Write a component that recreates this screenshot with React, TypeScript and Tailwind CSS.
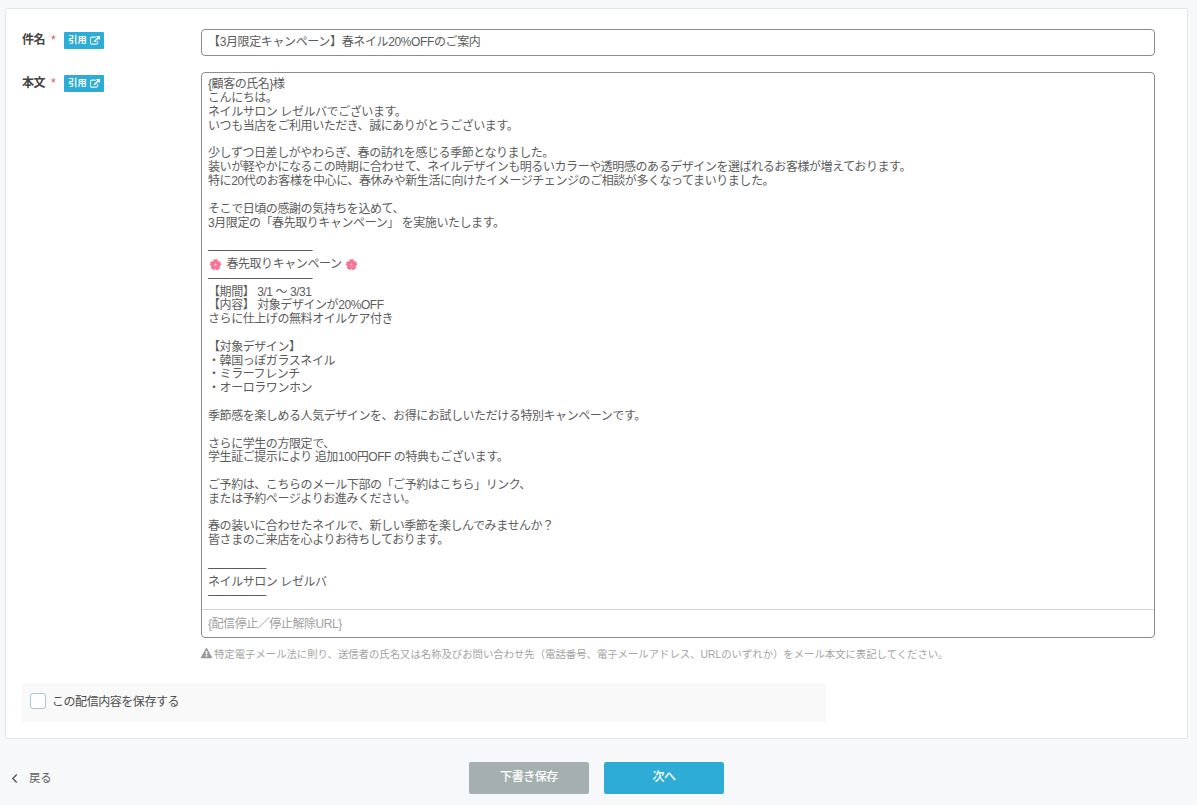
import { Fragment } from "react";

const BODY = `{顧客の氏名}様
こんにちは。
ネイルサロン レゼルバでございます。
いつも当店をご利用いただき、誠にありがとうございます。

少しずつ日差しがやわらぎ、春の訪れを感じる季節となりました。
装いが軽やかになるこの時期に合わせて、ネイルデザインも明るいカラーや透明感のあるデザインを選ばれるお客様が増えております。
特に20代のお客様を中心に、春休みや新生活に向けたイメージチェンジのご相談が多くなってまいりました。

そこで日頃の感謝の気持ちを込めて、
3月限定の「春先取りキャンペーン」 を実施いたします。

―――――――――
🌸 春先取りキャンペーン 🌸
―――――――――
【期間】 3/1 〜 3/31
【内容】 対象デザインが20%OFF
さらに仕上げの無料オイルケア付き

【対象デザイン】
・韓国っぽガラスネイル
・ミラーフレンチ
・オーロラワンホン

季節感を楽しめる人気デザインを、お得にお試しいただける特別キャンペーンです。

さらに学生の方限定で、
学生証ご提示により 追加100円OFF の特典もございます。

ご予約は、こちらのメール下部の「ご予約はこちら」リンク、
または予約ページよりお進みください。

春の装いに合わせたネイルで、新しい季節を楽しんでみませんか？
皆さまのご来店を心よりお待ちしております。

―――――
ネイルサロン レゼルバ
―――――`;

function Blossom() {
  return (
    <svg viewBox="0 0 24 24" className="mr-[1.500px] ml-[1px] inline-block size-[13px] align-[-3px]" aria-label="🌸">
      {[0, 72, 144, 216, 288].map((a) => (
        <path
          key={a}
          transform={`rotate(${a} 12 12.5)`}
          d="M12 13C8 10.500 6.800 6.500 8.300 3.300Q9.800 .6 12 3.200Q14.200 .6 15.700 3.300C17.200 6.500 16 10.500 12 13Z"
          fill="#fb7294"
        />
      ))}
      <circle cx="12" cy="12.500" r="4.500" fill="#f4668d" />
      <path d="M12 9v4M12 13l-3.300-1M12 13l3.300-1M12 13l-2 3M12 13l2 3" stroke="#ffd0dc" strokeWidth="1.200" />
    </svg>
  );
}

function Quote() {
  return (
    <button className="flex h-[17px] w-10 items-center justify-center gap-[3px] rounded-[1px] bg-[#2dacd5] text-[9.200px] leading-none font-bold tracking-normal text-white">
      <span className="pt-px">引用</span>
      <svg viewBox="0 0 1792 1792" className="size-[10px] fill-white stroke-white stroke-[60]">
        <path d="M1408 928v320q0 119-84.500 203.500T1120 1536H288q-119 0-203.500-84.500T0 1248V416q0-119 84.500-203.500T288 128h704q14 0 23 9t9 23v64q0 14-9 23t-23 9H288q-66 0-113 47t-47 113v832q0 66 47 113t113 47h832q66 0 113-47t47-113V928q0-14 9-23t23-9h64q14 0 23 9t9 23zm384-864v512q0 26-19 45t-45 19-45-19l-176-176-652 652q-10 10-23 10t-23-10L695 983q-10-10-10-23t10-23l652-652-176-176q-19-19-19-45t19-45 45-19h512q26 0 45 19t19 45z" />
      </svg>
    </button>
  );
}

function Label({ text }: { text: string }) {
  return (
    <div className="flex h-[23px] w-[179px] shrink-0 items-center">
      <span className="w-[29px] pt-px font-bold text-[#444]">{text}</span>
      <span className="w-[13px] text-[#d9534f]">*</span>
      <Quote />
    </div>
  );
}

export default function App() {
  return (
    <div className="flex h-[805px] w-full flex-col bg-[#f6f8fa] pt-2 pl-[5px] font-['Liberation_Sans','Noto_Sans_CJK_JP',sans-serif] text-[12px] leading-[13.820px] tracking-[-0.450px] text-[#5c5c5c]">
      <main className="flex h-[731px] w-[1183px] flex-col rounded-[1px] border border-[#e1e7ec] bg-white pt-5 pl-4">
        <div className="flex h-[43px]">
          <Label text="件名" />
          <div className="flex h-[27px] w-[954px] items-center rounded-[4px] border border-[#8c8c8c] px-1.5 tracking-[-0.370px]">
            【3月限定キャンペーン】春ネイル20%OFFのご案内
          </div>
        </div>
        <div className="flex h-[566px]">
          <Label text="本文" />
          <div className="flex w-[954px] flex-col rounded-[4px] border border-[#8c8c8c]">
            <div className="h-[536px] px-1.5 pt-[5.400px] tracking-[-0.430px] whitespace-pre">
              {BODY.split("🌸").map((part, i) => (
                <Fragment key={i}>
                  {i > 0 && <Blossom />}
                  {part}
                </Fragment>
              ))}
            </div>
            <div className="flex flex-1 items-center border-t border-[#d5d5d5] px-1.5 pt-[2px] text-[#a0a0a0]">
              {"{配信停止／停止解除URL}"}
            </div>
          </div>
        </div>
        <p className="mt-[9px] ml-[179px] flex h-[14px] items-center text-[10.370px] tracking-normal text-[#a3a3a3]">
          <svg viewBox="0 0 1792 1792" className="mr-[2px] mb-px size-[11px] fill-[#999]">
            <path d="M1024 1375v-190q0-14-9.500-23.500T992 1152H800q-13 0-22.500 9.500T768 1185v190q0 14 9.500 23.500T800 1408h192q13 0 22.500-9.500t9.500-23.500zm-2-374l18-459q0-12-10-19-13-11-24-11H786q-11 0-24 11-10 7-10 21l17 457q0 10 10 16.500t24 6.500h185q14 0 23.500-6.500t10.500-16.500zm-14-934l768 1408q35 63-2 126-17 29-46.500 46t-63.500 17H128q-34 0-63.500-17T18 1601q-37-63-2-126L784 67q17-31 47-49t65-18 65 18 47 49z" />
          </svg>
          <span className="pt-px">
            特定電子メール法に則り、送信者の氏名又は名称及びお問い合わせ先（電話番号、電子メールアドレス、URLのいずれか）をメール本文に表記してください。
          </span>
        </p>
        <label className="mt-[22px] flex h-[39px] w-[804px] items-center bg-[#f9f9f9] pb-[3px] pl-2 text-[#4c4c4c]">
          <span className="mr-[6px] size-4 rounded-[3px] border border-[#a5c7d1] bg-white" />
          <span className="pt-[3px]">この配信内容を保存する</span>
        </label>
      </main>
      <footer className="mt-[23px] flex h-8">
        <a className="flex w-[464px] items-center pl-[6px] text-[11.300px] tracking-normal">
          <svg viewBox="0 0 6 8" className="mr-[11px] h-[9px] w-[7px]" fill="none" stroke="#555" strokeWidth="1.200">
            <path d="M5 .5 1.500 4 5 7.500" />
          </svg>
          <span className="pt-px">戻る</span>
        </a>
        <button className="mr-[15px] w-[120px] rounded-[2px] bg-[#a5afb0] font-medium text-white">下書き保存</button>
        <button className="w-[120px] rounded-[2px] bg-[#2dacd5] font-medium text-white">次へ</button>
      </footer>
    </div>
  );
}
